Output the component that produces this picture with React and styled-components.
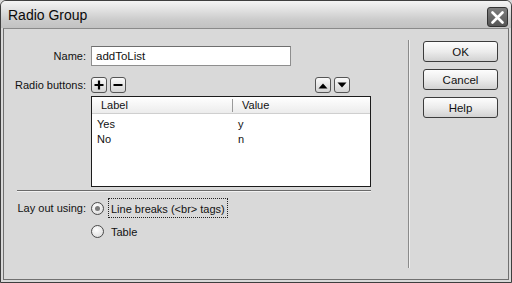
import React from "react";
import styled, { createGlobalStyle } from "styled-components";

const Global = createGlobalStyle`
  html, body { margin: 0; padding: 0; background: #d8d8d8; }
  * { box-sizing: border-box; }
`;

const Window = styled.div`
  width: 512px;
  height: 283px;
  border: 1px solid #3e3e3e;
  border-radius: 6px 6px 0 0;
  background: #d9d9d9;
  display: flex;
  flex-direction: column;
  overflow: hidden;
  font-family: "Liberation Sans", Arial, sans-serif;
  font-size: 11px;
  color: #111;
`;

const TitleBar = styled.div`
  height: 27px;
  flex: none;
  display: flex;
  align-items: flex-start;
  justify-content: space-between;
  padding: 0 3px 0 7px;
  background: linear-gradient(#f4f4f4 0%, #e0e0e0 35%, #cbcbcb 70%, #c2c2c2 100%);
`;

const Title = styled.div`
  font-size: 14px;
  line-height: 28px;
  color: #0a0a0a;
`;

const CloseButton = styled.div`
  width: 21px;
  height: 20px;
  margin-top: 6px;
  border: 1px solid #333;
  border-radius: 3px;
  background: linear-gradient(#7e7e7e, #555);
  display: flex;
  align-items: center;
  justify-content: center;
`;

const Body = styled.div`
  flex: 1;
  margin: 0 2px 2px 2px;
  border: 1px solid #707070;
  border-top-color: #8a8a8a;
  display: flex;
  background: #d9d9d9;
`;

const Main = styled.div`
  width: 368px;
  flex: none;
  padding-top: 17px;
  display: grid;
  grid-template-columns: 82px 280px;
  column-gap: 5px;
  align-content: start;
  align-items: center;
`;

const FieldLabel = styled.div`
  text-align: right;
  white-space: nowrap;
  margin-top: ${(p) => p.$mt || 0}px;
`;

const Cell = styled.div`
  margin-top: ${(p) => p.$mt || 0}px;
`;

const TextInput = styled.div`
  width: 200px;
  height: 20px;
  background: #fff;
  border: 1px solid #8e8e8e;
  border-top-color: #6e6e6e;
  padding: 0 4px;
  line-height: 18px;
  font-size: 11.5px;
`;

const ToolRow = styled.div`
  display: flex;
  align-items: center;
  gap: 3px;
  padding-right: 21px;
`;

const Spacer = styled.div`
  flex: 1;
`;

const SmallButton = styled.div`
  width: 16px;
  height: 16px;
  border: 1px solid #555;
  border-radius: 3px;
  background: linear-gradient(#fafafa, #d4d4d4);
  display: flex;
  align-items: center;
  justify-content: center;
`;

const Grid = styled.div`
  height: 91px;
  background: #fff;
  border: 1px solid #1c1c1c;
`;

const GridHeader = styled.div`
  height: 17px;
  display: flex;
  align-items: center;
  background: linear-gradient(#ffffff, #ececec);
  border-bottom: 1px solid #cfcfcf;
`;

const HeadCell = styled.div`
  width: ${(p) => p.$w}px;
  padding-left: ${(p) => p.$pl}px;
  border-left: ${(p) => (p.$div ? "1px solid #9a9a9a" : "none")};
  line-height: 13px;
`;

const GridRows = styled.div`
  padding-top: 3px;
`;

const GridRow = styled.div`
  display: flex;
  height: 15px;
  line-height: 15px;
`;

const RowCell = styled.div`
  width: ${(p) => p.$w}px;
  padding-left: ${(p) => p.$pl}px;
`;

const Separator = styled.div`
  grid-column: 1 / -1;
  margin: 3px 0 0 13px;
  height: 2px;
  border-top: 1px solid #6a6a6a;
  border-bottom: 1px solid #f2f2f2;
`;

const RadioOption = styled.div`
  display: flex;
  align-items: center;
  gap: 4px;
  height: 20px;
`;

const RadioCircle = styled.div`
  width: 13px;
  height: 13px;
  border-radius: 50%;
  border: 1px solid #4a4a4a;
  background: radial-gradient(circle at 40% 35%, #ffffff, #d6d6d6);
  display: flex;
  align-items: center;
  justify-content: center;
  &::after {
    content: "";
    display: ${(p) => (p.$checked ? "block" : "none")};
    width: 5px;
    height: 5px;
    border-radius: 50%;
    background: #7c7c7c;
  }
`;

const OptionText = styled.div`
  border: 1px dotted ${(p) => (p.$focus ? "#222" : "transparent")};
  padding: 3px 2px 1px 2px;
  line-height: 14px;
  font-size: 11px;
`;

const Divider = styled.div`
  width: 2px;
  margin: 11px 0 0 36px;
  height: 228px;
  border-left: 1px solid #8a8a8a;
  border-right: 1px solid #f0f0f0;
`;

const ButtonColumn = styled.div`
  margin-left: 13px;
  padding-top: 12px;
  display: flex;
  flex-direction: column;
  gap: 7px;
`;

const DialogButton = styled.div`
  width: 75px;
  height: 21px;
  border: 1px solid #3c3c3c;
  border-radius: 3px;
  background: linear-gradient(#fdfdfd 0%, #ececec 50%, #d2d2d2 100%);
  display: flex;
  align-items: center;
  justify-content: center;
  font-size: 11.5px;
`;

const Plus = () => (
  <svg width="10" height="10" viewBox="0 0 10 10">
    <path d="M5 0.5v9M0.5 5h9" stroke="#000" strokeWidth="2.2" />
  </svg>
);
const Minus = () => (
  <svg width="10" height="10" viewBox="0 0 10 10">
    <path d="M0.5 5h9" stroke="#000" strokeWidth="2.2" />
  </svg>
);
const Up = () => (
  <svg width="10" height="7" viewBox="0 0 10 7">
    <path d="M0.5 6.5L5 1.5L9.5 6.5Z" fill="#000" />
  </svg>
);
const Down = () => (
  <svg width="10" height="7" viewBox="0 0 10 7">
    <path d="M0.5 0.5L5 5.5L9.5 0.5Z" fill="#000" />
  </svg>
);
const CloseX = () => (
  <svg width="13" height="13" viewBox="0 0 13 13">
    <path d="M1.5 1.5L11.5 11.5M11.5 1.5L1.5 11.5" stroke="#fff" strokeWidth="2.6" strokeLinecap="round" />
  </svg>
);

export default function App() {
  return (
    <>
      <Global />
      <Window>
        <TitleBar>
          <Title>Radio Group</Title>
          <CloseButton>
            <CloseX />
          </CloseButton>
        </TitleBar>
        <Body>
          <Main>
            <FieldLabel>Name:</FieldLabel>
            <Cell>
              <TextInput>addToList</TextInput>
            </Cell>

            <FieldLabel $mt={11}>Radio buttons:</FieldLabel>
            <Cell $mt={11}>
              <ToolRow>
                <SmallButton><Plus /></SmallButton>
                <SmallButton><Minus /></SmallButton>
                <Spacer />
                <SmallButton><Up /></SmallButton>
                <SmallButton><Down /></SmallButton>
              </ToolRow>
            </Cell>

            <div />
            <Cell $mt={3}>
              <Grid>
                <GridHeader>
                  <HeadCell $w={140} $pl={9}>Label</HeadCell>
                  <HeadCell $w={138} $pl={9} $div>Value</HeadCell>
                </GridHeader>
                <GridRows>
                  <GridRow>
                    <RowCell $w={140} $pl={5}>Yes</RowCell>
                    <RowCell $w={138} $pl={6}>y</RowCell>
                  </GridRow>
                  <GridRow>
                    <RowCell $w={140} $pl={5}>No</RowCell>
                    <RowCell $w={138} $pl={6}>n</RowCell>
                  </GridRow>
                </GridRows>
              </Grid>
            </Cell>

            <Separator />

            <FieldLabel $mt={6}>Lay out using:</FieldLabel>
            <Cell $mt={6}>
              <RadioOption>
                <RadioCircle $checked />
                <OptionText $focus>Line breaks (&lt;br&gt; tags)</OptionText>
              </RadioOption>
            </Cell>

            <div />
            <Cell $mt={3}>
              <RadioOption>
                <RadioCircle />
                <OptionText>Table</OptionText>
              </RadioOption>
            </Cell>
          </Main>
          <Divider />
          <ButtonColumn>
            <DialogButton>OK</DialogButton>
            <DialogButton>Cancel</DialogButton>
            <DialogButton>Help</DialogButton>
          </ButtonColumn>
        </Body>
      </Window>
    </>
  );
}
